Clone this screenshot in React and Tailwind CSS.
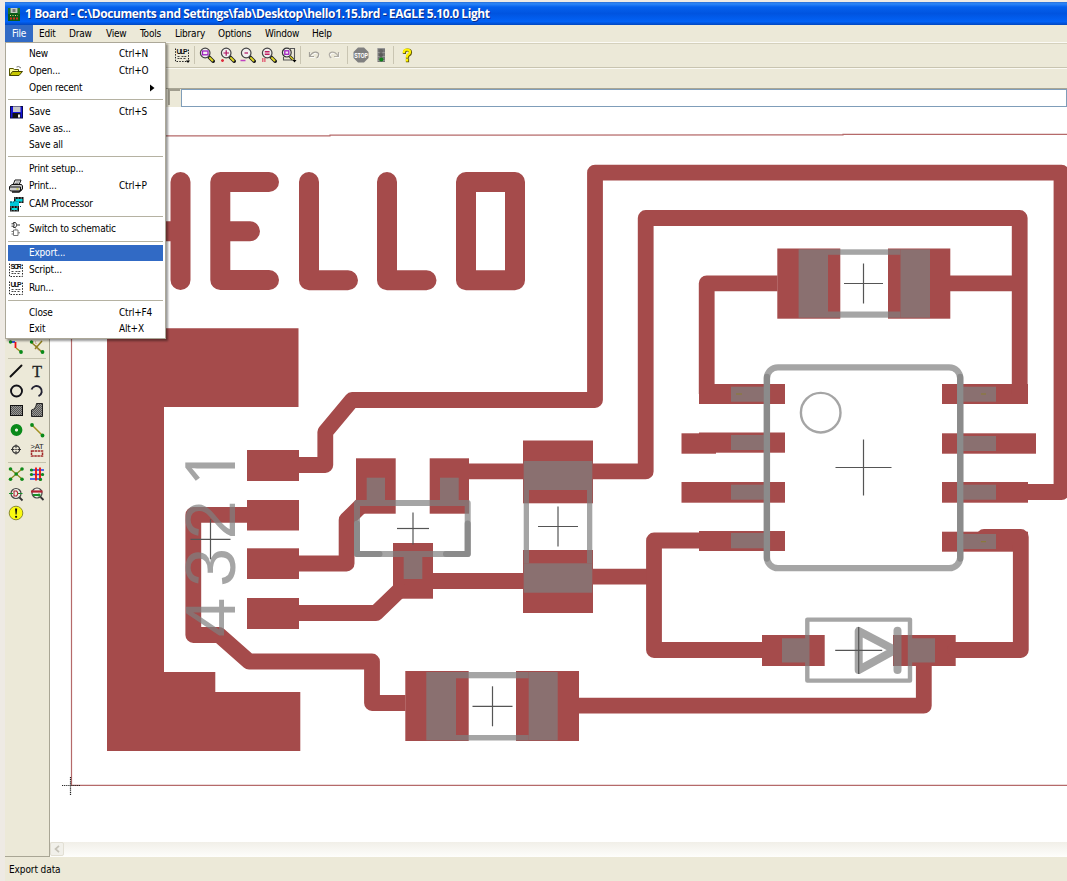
import React from "react";

const RED = "#a54b4b";

/* ---------- icons ---------- */
function Svg({ w = 16, h = 16, children }) {
  return (
    <svg width={w} height={h} viewBox={`0 0 ${w} ${h}`} fill="none" className="block shrink-0">
      {children}
    </svg>
  );
}

const FolderIcon = () => (
  <Svg>
    <path d="M1.500 12.500V5.500H5L6.500 6.500H10.500V8" fill="#ffff9a" stroke="#555500" />
    <path d="M1.500 12.500L4.500 8.500H14.500L11 12.500Z" fill="#c8c800" stroke="#444400" />
    <path d="M8.500 4Q10.500 2.500 13 5" stroke="#777" />
  </Svg>
);
const SaveIcon = () => (
  <Svg>
    <rect x="2" y="2" width="13" height="12.500" fill="#0a0a50" />
    <rect x="3" y="3" width="11" height="10.500" fill="#1414d8" />
    <rect x="5" y="2.500" width="7.500" height="5.500" fill="#c8c8c8" />
    <rect x="4.500" y="9" width="8" height="5" fill="#111" />
    <rect x="10" y="10.500" width="2" height="3" fill="#eee" />
  </Svg>
);
const PrintIcon = () => (
  <Svg>
    <path d="M5 7L7 2H13L11 7" fill="#fff" stroke="#111" />
    <path d="M7.500 4H11.500M6.500 5.500H10.500" stroke="#555" strokeWidth=".8" />
    <path d="M1.500 8.500L4 6.500H13.500L14.500 8V11L12.500 13H2.500L1.500 11.500Z" fill="#ccc" stroke="#111" />
    <path d="M2 9H12.500V12.500" stroke="#111" />
    <path d="M4 14H11L13.500 11.500" stroke="#111" strokeWidth="1.400" />
    <rect x="8.500" y="10.500" width="2" height="1" fill="#cc0" />
  </Svg>
);
const CamIcon = () => (
  <Svg>
    <rect x="6" y="1" width="9.500" height="6" fill="#111" />
    <path d="M6.500 2H15M6.500 6H15" stroke="#9aa" strokeDasharray="1.500 1.500" />
    <rect x="7.500" y="3" width="7" height="2.500" fill="#00d8e0" />
    <rect x="2" y="5.500" width="9" height="5.500" fill="#00c8d8" />
    <path d="M2 6H6M6 10.500H13" stroke="#045" strokeDasharray="2 1" />
    <rect x="2" y="10" width="9" height="5.500" fill="#111" />
    <path d="M2.500 11H10.500M2.500 15H10.500" stroke="#9aa" strokeDasharray="1.500 1.500" />
    <rect x="3.500" y="12" width="6" height="2" fill="#00e0e0" />
  </Svg>
);
const GateIcon = () => (
  <Svg>
    <path d="M5.500 1.500H7.500Q10.500 4 7.500 6.500H5.500Q6.800 4 5.500 1.500ZM3.500 2.800H6M3.500 5.200H6M9.300 4H12" stroke="#333" strokeWidth="1" />
    <path d="M5.500 9H10V14.500H5.500ZM3.500 10.500H5.500M3.500 13H5.500M10 11.800H12M7.800 7.500V9" stroke="#777" />
  </Svg>
);
function ScriptIcon({ label, arrow }) {
  return (
    <Svg>
      <path d="M1.500 1.500V14.500H14.500V1.500" stroke="#222" strokeDasharray="1.500 1.300" />
      <text x="8" y="7" textAnchor="middle" fontSize="7" fontWeight="700" textLength="11" fill="#111" fontFamily="Liberation Sans, sans-serif">
        {label}
      </text>
      <path d="M3.500 9.500H6M7.500 9.500H12.500M3.500 11.500H8M9.500 11.500H12" stroke="#333" strokeWidth=".9" strokeDasharray="2 .8" />
      {arrow && <path d="M12 13.500H16L14 16Z" fill="#000" />}
    </Svg>
  );
}
function Lens({ children }) {
  return (
    <Svg>
      <path d="M10 10L14.200 14.200" stroke="#222" strokeWidth="3.600" strokeLinecap="round" />
      <path d="M10.300 10.300L14 14" stroke="#e0d820" strokeWidth="1.900" />
      <circle cx="6.200" cy="6" r="4.800" fill="#f1eeee" stroke="#444" strokeWidth="1.200" />
      {children}
    </Svg>
  );
}
const ZoomFit = () => (
  <Lens>
    <rect x="3.500" y="4" width="5.500" height="3.800" stroke="#a020c0" strokeWidth="1.300" />
  </Lens>
);
const ZoomPlus = () => (
  <Lens>
    <path d="M3.500 6H9M6.200 3.300V8.800" stroke="#b01060" strokeWidth="1.200" />
    <path d="M1 13.500H4M2.500 12V15" stroke="#e03040" strokeWidth="1.500" />
  </Lens>
);
const ZoomMinus = () => (
  <Lens>
    <path d="M4.500 6H8" stroke="#b01060" strokeWidth="1.200" />
    <path d="M.5 13.500H5.500" stroke="#c040c0" strokeWidth="1.500" />
  </Lens>
);
const ZoomRedraw = () => (
  <Lens>
    <path d="M3.800 4.500H8.600M3.800 6H8.600M3.800 7.500H8.600" stroke="#c02060" strokeWidth="1" />
    <path d="M1 12H5M1 14H5" stroke="#e04060" strokeWidth="1.400" strokeDasharray="1.500 .6" />
  </Lens>
);
const ZoomSelect = () => (
  <Svg>
    <path d="M9 1.500H13.500V13H2.500V10" stroke="#555" strokeWidth="1.100" />
    <path d="M9 9.500L12 12.500" stroke="#222" strokeWidth="2.800" />
    <path d="M9 9.500L12 12.500" stroke="#e0d820" strokeWidth="1.300" />
    <circle cx="5.800" cy="5.600" r="4.400" fill="#f1eeee" stroke="#333" strokeWidth="1.200" />
    <rect x="3.800" y="3.800" width="4" height="3.500" stroke="#a020c0" strokeWidth="1.300" />
    <path d="M11.500 13H15.500L13.500 15.500Z" fill="#000" />
  </Svg>
);
const UndoIcon = () => (
  <Svg>
    <path d="M3.500 5V9.500H8M3.800 9.200Q6.500 4.800 10 5.200Q13.500 6 12.500 8.500Q12 10.500 10.500 11" stroke="#fff" transform="translate(.8 .8)" />
    <path d="M3.500 5V9.500H8M3.800 9.200Q6.500 4.800 10 5.200Q13.500 6 12.500 8.500Q12 10.500 10.500 11" stroke="#a3a099" strokeWidth="1.200" />
  </Svg>
);
const RedoIcon = () => (
  <Svg>
    <path d="M12.500 5V9.500H8M12.200 9.200Q9.500 4.800 6 5.200Q2.500 6 3.500 8.500Q4 10.500 5.500 11" stroke="#fff" transform="translate(.8 .8)" />
    <path d="M12.500 5V9.500H8M12.200 9.200Q9.500 4.800 6 5.200Q2.500 6 3.500 8.500Q4 10.500 5.500 11" stroke="#b0ada5" strokeWidth="1.200" />
  </Svg>
);
const StopIcon = () => (
  <Svg>
    <path d="M5 .5H11L15.500 5V11L11 15.500H5L.5 11V5Z" fill="#808080" />
    <text x="8" y="10.700" textAnchor="middle" fontSize="7.500" fontWeight="700" textLength="13.500" lengthAdjust="spacingAndGlyphs" fill="#fff" fontFamily="Liberation Sans, sans-serif">
      STOP
    </text>
  </Svg>
);
const LightIcon = () => (
  <Svg>
    <rect x="4.500" y="1" width="7.500" height="14" fill="#777" />
    <path d="M4.500 1.500H12M4.500 5.500H12M4.500 9.500H12M4.500 13.500H12" stroke="#bbb" strokeDasharray="1 1" />
    <circle cx="8" cy="4" r="2" fill="#666" />
    <circle cx="8" cy="8" r="2" fill="#5a5a5a" />
    <circle cx="8.300" cy="12.500" r="2.100" fill="#108018" />
  </Svg>
);
const HelpIcon = () => (
  <Svg>
    <g fill="none" strokeLinecap="square">
      <path d="M5 4.800Q5.200 2.600 8 2.600Q11 2.600 11 5Q11 6.600 9.200 7.600Q8 8.400 8 9.600M8 13V13.200" stroke="#5a5200" strokeWidth="3.200" transform="translate(.5 .4)" />
      <path d="M5 4.800Q5.200 2.600 8 2.600Q11 2.600 11 5Q11 6.600 9.200 7.600Q8 8.400 8 9.600M8 13V13.200" stroke="#fff200" strokeWidth="2.400" />
    </g>
  </Svg>
);

/* ---------- side palette icons ---------- */
const RouteIcon = () => (
  <Svg>
    <path d="M2 4H7" stroke="#1030e0" strokeWidth="1.600" />
    <path d="M7.500 4V10" stroke="#f01010" strokeWidth="1.800" />
    <path d="M8 10L13 14" stroke="#a09020" strokeWidth="1.400" />
    <circle cx="2.500" cy="4" r="1.700" fill="#0a8a1a" />
    <circle cx="13" cy="14" r="1.900" fill="#0a8a1a" />
  </Svg>
);
const RipupIcon = () => (
  <Svg>
    <path d="M2 4H7V10L12 14" stroke="#c08080" strokeDasharray="1 1" />
    <path d="M2 4L13 14M13 3L6 11" stroke="#908020" strokeWidth="1.500" />
    <circle cx="2.500" cy="4" r="1.700" fill="#0a8a1a" />
    <circle cx="13.500" cy="14" r="1.900" fill="#0a8a1a" />
  </Svg>
);
const WireIcon = () => (
  <Svg>
    <path d="M2.500 13.500L13.500 2.500" stroke="#111" strokeWidth="1.900" strokeLinecap="round" />
  </Svg>
);
const TextIcon = () => (
  <Svg>
    <text x="8" y="13.500" textAnchor="middle" fontSize="16" fill="#222" stroke="#222" strokeWidth=".3" fontFamily="Liberation Serif, serif">
      T
    </text>
  </Svg>
);
const CircleIcon = () => (
  <Svg>
    <circle cx="8.500" cy="8" r="5.500" stroke="#111118" strokeWidth="1.900" />
  </Svg>
);
const ArcIcon = () => (
  <Svg>
    <path d="M2.500 6.500A5.300 5.300 0 1 1 9.500 13.200" stroke="#223" strokeWidth="1.900" />
  </Svg>
);
const HatchDefs = () => (
  <defs>
    <pattern id="hatch" width="2" height="2" patternUnits="userSpaceOnUse">
      <rect width="2" height="2" fill="#9a9a96" />
      <rect width="1" height="1" fill="#555" />
      <rect x="1" y="1" width="1" height="1" fill="#555" />
    </pattern>
  </defs>
);
const RectIcon = () => (
  <Svg>
    <HatchDefs />
    <rect x="2.500" y="3.500" width="12" height="10" fill="url(#hatch)" stroke="#111" />
  </Svg>
);
const PolyIcon = () => (
  <Svg>
    <path d="M2.500 14.500V8Q7 7 7.500 1.500H13.500V14.500Z" fill="url(#hatch)" stroke="#222" />
  </Svg>
);
const ViaIcon = () => (
  <Svg>
    <circle cx="8.500" cy="8" r="3.700" stroke="#0a8a1a" strokeWidth="4.400" />
    <circle cx="8.500" cy="8" r="1.300" fill="#e6f5e0" />
  </Svg>
);
const SignalIcon = () => (
  <Svg>
    <path d="M3 3L13.500 13.500" stroke="#a09020" strokeWidth="1.500" />
    <circle cx="3" cy="3" r="1.900" fill="#0a8a1a" />
    <circle cx="13.500" cy="13.500" r="1.900" fill="#0a8a1a" />
  </Svg>
);
const HoleIcon = () => (
  <Svg>
    <circle cx="8" cy="7.500" r="3.600" stroke="#333" strokeWidth="1.200" />
    <path d="M8 2.500V6M8 9V12.500M3 7.500H6.500M9.500 7.500H13" stroke="#333" />
    <circle cx="8" cy="7.500" r=".8" fill="#333" />
  </Svg>
);
const AttrIcon = () => (
  <Svg>
    <text x="8" y="7" textAnchor="middle" fontSize="7.500" fill="#222" textLength="13" fontFamily="Liberation Sans, sans-serif">
      &gt;AT
    </text>
    <path d="M2.500 9H13.500V14H2.500Z" stroke="#a02828" strokeWidth="1.500" strokeDasharray="2.500 .6" />
  </Svg>
);
const RatsnestIcon = () => (
  <Svg>
    <path d="M2.500 3L14 13M14 3L2.500 13" stroke="#8a8a20" strokeWidth="1.200" />
    {[[2.5, 3], [14, 3], [8.2, 8], [2.5, 13.2], [14, 13.2]].map(([x, y]) => (
      <circle key={`${x}-${y}`} cx={x} cy={y} r="1.800" fill="#118a1a" />
    ))}
  </Svg>
);
const AutoIcon = () => (
  <Svg>
    <path d="M1 4H15M1 8.500H15M1 13H13" stroke="#1a3ce8" strokeWidth="1.500" />
    <path d="M7 1.500V14.500M11 1.500V14.500" stroke="#e81818" strokeWidth="1.900" />
    {[[2.5, 4], [2.5, 8.5], [13.5, 8.5], [11.5, 13.5]].map(([x, y]) => (
      <circle key={`${x}-${y}`} cx={x} cy={y} r="1.600" fill="#118a1a" />
    ))}
  </Svg>
);
const ErcIcon = () => (
  <Svg>
    <circle cx="8" cy="7.500" r="5" fill="#eaf0e6" stroke="#444" strokeWidth="1.200" />
    <path d="M1 7.500H5M10 7.500H14.500" stroke="#18902a" strokeWidth="1.200" />
    <path d="M6 5H8.500Q11 7.500 8.500 10H6Z" stroke="#b02030" strokeWidth="1.100" />
    <path d="M11.500 11.500L14.500 14.500" stroke="#333" strokeWidth="1.800" />
  </Svg>
);
const DrcIcon = () => (
  <Svg>
    <circle cx="8" cy="7" r="5" fill="#eef0e8" stroke="#444" strokeWidth="1.200" />
    <path d="M2 5.500H13.500" stroke="#b02030" strokeWidth="2.200" />
    <path d="M4 9H11" stroke="#18902a" strokeWidth="2" />
    <circle cx="10" cy="9" r="1.600" fill="#18902a" />
    <path d="M11.500 11L14.500 14" stroke="#333" strokeWidth="1.800" />
  </Svg>
);
const ErrorsIcon = () => (
  <Svg>
    <circle cx="8" cy="8" r="6.800" fill="#fbfb10" stroke="#8c8c30" />
    <path d="M7 3.500H9.200L8.600 9.500H7.600Z" fill="#111" />
    <circle cx="8.100" cy="11.800" r="1.100" fill="#111" />
  </Svg>
);

/* ---------- menu ---------- */
const MENU = [
  ["New", "Ctrl+N", null, "h-[17px]"],
  ["Open...", "Ctrl+O", <FolderIcon />, "h-[17px]"],
  ["Open recent", "▶", null, "h-[17px]"],
  ["sep", "h-[7px]"],
  ["Save", "Ctrl+S", <SaveIcon />, "h-[18px]"],
  ["Save as...", "", null, "h-[16px]"],
  ["Save all", "", null, "h-[15px]"],
  ["sep", "h-[8px]"],
  ["Print setup...", "", null, "h-[17px]"],
  ["Print...", "Ctrl+P", <PrintIcon />, "h-[17px]"],
  ["CAM Processor", "", <CamIcon />, "h-[19px]"],
  ["sep", "h-[6px]"],
  ["Switch to schematic", "", <GateIcon />, "h-[19px]"],
  ["sep", "h-[7px]"],
  ["Export...", "", null, "h-[16px]"],
  ["Script...", "", <ScriptIcon label="SCR" />, "h-[18px]"],
  ["Run...", "", <ScriptIcon label="ULP" />, "h-[18px]"],
  ["sep", "h-[7px]"],
  ["Close", "Ctrl+F4", null, "h-[17px]"],
  ["Exit", "Alt+X", null, "h-[16px]"],
];

function FileMenu() {
  return (
    <div className="absolute top-[42px] left-[5px] w-[161px] h-[297px] bg-white border border-[#aca899] pt-[2px] px-[2px] shadow-[2px_2px_2px_rgba(0,0,0,0.4)]">
      {MENU.map((m, i) =>
        m[0] === "sep" ? (
          <div key={i} className={`flex items-center ${m[1]}`}>
            <div className="h-px w-full bg-[#b5b2a2]" />
          </div>
        ) : (
          <div key={i} className={`flex items-center ${m[3]} ${m[0] === "Export..." ? "bg-[#316ac5] text-white" : "text-black"}`}>
            <div className="w-[21px] shrink-0">{m[2]}</div>
            <div className="w-[90px] shrink-0 whitespace-nowrap">{m[0]}</div>
            {m[1] === "▶" ? (
              <svg width="5" height="8" viewBox="0 0 5 8" className="ml-[31px]">
                <path d="M0 .5L4.500 4L0 7.500Z" fill="#000" />
              </svg>
            ) : (
              <div className="whitespace-nowrap">{m[1]}</div>
            )}
          </div>
        )
      )}
    </div>
  );
}

/* ---------- board drawing ---------- */
function Cross({ x, y, rx, ry }) {
  return (
    <g strokeWidth="1.200" stroke="#555">
      <path d={`M${x - rx} ${y}H${x + rx}`} />
      <path d={`M${x} ${y - ry}V${y + ry}`} />
    </g>
  );
}
function Rects({ list }) {
  return list.map(([x1, y1, x2, y2], i) => <rect key={i} x={x1} y={y1} width={x2 - x1} height={y2 - y1} />);
}

const PADS = [
  [247, 450, 299, 481], [247, 500, 299, 530.5], [247, 548.3, 299, 579], [247, 598, 299, 629],
  [356, 458.3, 395.7, 513.7], [429.7, 458.3, 469, 513.7], [393, 543, 433, 598.7],
  [523, 440.5, 593, 503.3], [523, 550, 593, 613],
  [405.3, 671, 468.7, 741], [516, 671, 579, 741],
  [777.3, 248.5, 840.3, 318.7], [888, 248.5, 950.3, 318.7],
  [762, 635, 824.7, 666], [893, 635, 955.7, 666],
  [699, 384, 785, 404], [699, 432.5, 785, 452.7], [681.5, 433.3, 716, 453.7], [681.5, 482, 785, 502.7], [699, 531, 785, 551],
  [942, 384, 1028, 404], [942, 433.3, 1036, 453.7], [942, 482, 1028, 502.7], [942, 531.7, 1028, 551.7],
];
const SILK_PADS = [
  [366.7, 477.7, 385, 503], [440, 477.7, 458.7, 503], [403.7, 554, 422.3, 579],
  [523.7, 461, 592.3, 490], [523.7, 563.3, 592.3, 592.7], [523.7, 490, 529, 563.3], [587, 490, 592.3, 563.3],
  [426.3, 672, 456, 740.3], [528.7, 672, 557.7, 740.3], [456, 672, 528.7, 678.3], [456, 735, 528.7, 740.5],
  [798.6, 249.3, 828, 317.7], [900.5, 249.3, 930, 317.7], [828, 249.3, 900.5, 254.8], [828, 311.5, 900.5, 317.7],
  [782, 638.3, 808, 662.5], [909, 638.3, 935, 662.5],
  [731, 386.7, 766, 401.7], [731, 435, 766, 450], [731, 484.7, 766, 499.7], [731, 533, 766, 548.3],
  [961, 386.7, 996, 401.7], [961, 436, 996, 451], [961, 484.7, 996, 499.7], [961, 534, 996, 549],
];

function Board() {
  return (
    <svg width="1017" height="735" viewBox="50 107 1017 735" className="block shrink-0 bg-white">
      <g fill="none" stroke="#b56a6a" strokeWidth="1.200">
        <path d="M71.500 136V785.300H1067" />
        <path d="M71.500 135.800H330V135.200L843 134.800V134.300H1067" />
      </g>
      <g fill={RED}>
        <path d="M107 328.300H298.500V407H164V672H215.300V692H300.300V751H107Z" />
        <Rects list={PADS} />
      </g>
      <g fill="none" stroke={RED} strokeWidth="20" strokeLinecap="round" strokeLinejoin="round">
        <path d="M101 182V280M180.500 182V280M101 231.300H180.500" />
        <path d="M269 182H220.300V280H269M220.300 231.300H250" />
        <path d="M309 182V280.300H348" />
        <path d="M387 182V280.300H426.500" />
        <path d="M466 182H515V280.300H466Z" />
      </g>
      <g fill="none" stroke={RED} strokeWidth="15.800" strokeLinejoin="round">
        <path d="M299 465H325.300V432L352 400H595V172.700H1061.500V492H1027" />
        <path d="M593 471.400H645.700V218H1019.700V394" />
        <path d="M950 283.300H1019M777.500 283.300H706.700V394" />
        <path d="M247 514.800H193.300V635H219L249 661.500H372V703H405.500" />
        <path d="M299 563.500H346.600V520L370 497" />
        <path d="M299 613H376L405 585" />
        <path d="M433 581H523M469 471.400H523M593 576.700H654" />
        <path d="M699 540.500H654V650H762" />
        <path d="M955 650H1020.800V537H984" strokeLinecap="round" />
        <path d="M579 705.700H923.800V666" />
      </g>

      <g opacity=".7" fill="#808080" stroke="none">
        <Rects list={SILK_PADS} />
        <g fill="none" stroke="#808080">
          <rect x="357" y="503" width="110.700" height="51" strokeWidth="6" strokeLinejoin="round" />
          <rect x="766.900" y="367.300" width="193.300" height="200.900" rx="11" strokeWidth="6.300" />
          <rect x="807.300" y="619.600" width="102.700" height="61" strokeWidth="4.400" strokeLinejoin="round" />
          <circle cx="820.700" cy="412.700" r="19.800" strokeWidth="2.400" />
          <path d="M858.700 631V670L895 650Z" strokeWidth="8" strokeLinejoin="round" />
          <path d="M897.500 630.700V670" strokeWidth="8" strokeLinecap="round" />
        </g>
      </g>
      <g opacity=".7" fill="#808080" fontSize="70.500">
        <text transform="translate(235 487) rotate(-90)" fontSize="69" fontFamily="Noto Sans, sans-serif">1</text>
        <g fontFamily="Liberation Sans, sans-serif">
          <text transform="translate(235 539.500) rotate(-90)">2</text>
          <text transform="translate(235 587) rotate(-90)">3</text>
          <text transform="translate(235 637) rotate(-90)">4</text>
        </g>
      </g>
      <g fill="none" stroke="#8b8b8b" strokeLinecap="round" strokeLinejoin="round">
        <path d="M357 523.500V554H379.500M446 554H467.700V523.500" strokeWidth="6" />
        <path d="M766.900 377V558.500M960.200 377V558.500" strokeWidth="6.300" />
      </g>
      <path d="M736 394H742M981 394H986M981 541.700H986" stroke="#8b7d2f" />

      <Cross x={863.5} y={283.5} rx={19.5} ry={20} />
      <Cross x={863.5} y={467.5} rx={28} ry={28} />
      <Cross x={558} y={526.5} rx={20} ry={20} />
      <Cross x={492.5} y={706.3} rx={20} ry={20} />
      <Cross x={413} y={528.5} rx={16} ry={16} />
      <Cross x={210.5} y={539.3} rx={20} ry={20} />
      <Cross x={858.7} y={650.4} rx={23.5} ry={23.5} />
      <path d="M62 785.500H80M70.500 777V795" stroke="#222" strokeWidth="1.200" strokeDasharray="1.200 .9" />
    </svg>
  );
}

const MENUBAR = [
  ["Edit", "w-[30px]"], ["Draw", "w-[37px]"], ["View", "w-[34px]"], ["Tools", "w-[35px]"],
  ["Library", "w-[43px]"], ["Options", "w-[47px]"], ["Window", "w-[47px]"], ["Help", "w-[40px]"],
];

const VSep = ({ className }) => <div className={`h-[18px] w-px bg-[#c9c5b2] ${className}`} />;
const HSep = ({ className }) => <div className={`ml-[3px] h-px w-[38px] bg-[#c5c2ae] ${className}`} />;
function Pair({ a, b, className }) {
  return (
    <div className={`flex gap-[5px] pl-[3px] ${className}`}>
      {a}
      {b}
    </div>
  );
}

export default function App() {
  return (
    <div className="relative flex h-[881px] w-[1067px] overflow-hidden bg-[#eeeae4] pl-[5px] pt-[2px] text-[10px] leading-none text-black [font-family:'DejaVu_Sans_Condensed','DejaVu_Sans',sans-serif] [font-stretch:condensed] tracking-[-0.2px]">
      <div className="flex w-[1062px] shrink-0 flex-col bg-[#ece9d8]">
        <div className="flex h-[23px] shrink-0 items-center bg-[linear-gradient(180deg,#2a70d8_0%,#2c86f8_8%,#0560ec_22%,#0054e0_50%,#0262f6_85%,#0248c0_100%)] pl-[2px]">
          <Svg w={14} h={14}>
            <rect x="1" y="1" width="12" height="13" fill="#0b5a18" />
            <rect x="3.500" y="1" width="7" height="5" fill="#c4ccc0" />
            <path d="M2 1.500V7M12 1.500V7" stroke="#58c058" strokeDasharray="1 1" />
            <path d="M3 8.500H11" stroke="#e0e080" strokeDasharray="1 1.500" />
            <path d="M3 11.500H11" stroke="#d03020" strokeWidth="2" strokeDasharray="2 1" />
            <rect x="5.500" y="2" width="3" height="3" fill="#777" />
          </Svg>
          <div className="ml-[4px] whitespace-pre text-[12px] font-bold tracking-[-0.4px] text-white [font-family:'Open_Sans','Noto_Sans',sans-serif] [font-stretch:normal] [text-shadow:1px_1px_0_#0a2e8a]">
            1 Board - C:\Documents and Settings\fab\Desktop\hello1.15.brd - EAGLE 5.10.0 Light
          </div>
        </div>

        <div className="flex h-[17px] shrink-0">
          <div className="flex w-[28px] items-center bg-[#316ac5] pl-[7px] text-white">File</div>
          {MENUBAR.map(([t, w]) => (
            <div key={t} className={`flex items-center pl-[6px] ${w}`}>
              {t}
            </div>
          ))}
        </div>

        <div className="flex h-[25px] shrink-0 items-center border-t border-[#fbfaf5] pl-[169px] shadow-[inset_0_1px_0_#d5d1bd]">
          <ScriptIcon label="ULP" arrow />
          <VSep className="ml-[4px] mr-[4px]" />
          <div className="flex gap-[4.500px]">
            <ZoomFit />
            <ZoomPlus />
            <ZoomMinus />
            <ZoomRedraw />
            <ZoomSelect />
          </div>
          <VSep className="ml-[3px] mr-[5px]" />
          <div className="flex gap-[4px]">
            <UndoIcon />
            <RedoIcon />
          </div>
          <VSep className="ml-[5px] mr-[5px]" />
          <div className="flex gap-[4px]">
            <StopIcon />
            <LightIcon />
          </div>
          <VSep className="ml-[4px] mr-[5px]" />
          <HelpIcon />
        </div>
        <div className="h-[22px] shrink-0 border-b border-t border-b-[#a9a695] border-t-[#c8c4b0] shadow-[inset_0_1px_0_#faf9f2]" />

        <div className="flex min-h-0 flex-1">
          <div className="w-[45px] shrink-0 border-b border-r border-[#a9a695] pt-[249px]">
            <Pair a={<RouteIcon />} b={<RipupIcon />} />
            <HSep className="mt-[4px] mb-[4px]" />
            <Pair a={<WireIcon />} b={<TextIcon />} />
            <Pair className="mt-[4px]" a={<CircleIcon />} b={<ArcIcon />} />
            <Pair className="mt-[3px]" a={<RectIcon />} b={<PolyIcon />} />
            <Pair className="mt-[4px]" a={<ViaIcon />} b={<SignalIcon />} />
            <Pair className="mt-[4px]" a={<HoleIcon />} b={<AttrIcon />} />
            <HSep className="mt-[4px] mb-[3px]" />
            <Pair a={<RatsnestIcon />} b={<AutoIcon />} />
            <Pair className="mt-[4px]" a={<ErcIcon />} b={<DrcIcon />} />
            <Pair className="mt-[3px]" a={<ErrorsIcon />} />
          </div>
          <div className="flex min-w-0 flex-1 flex-col">
            <div className="flex h-[18px] shrink-0 bg-[#ece9d8] pl-[118px]">
              <div className="mr-[1px] h-[16px] w-[12px] border-l-2 border-t-2 border-[#a09d8e]" />
              <div className="flex-1 border border-[#7f9db9] bg-white" />
            </div>
            <Board />
            <div className="flex h-[15px] shrink-0 bg-[linear-gradient(180deg,#f1efe8,#fefefc)]">
              <div className="flex h-[14px] w-[14px] items-center justify-center rounded-[2px] border border-[#e2dfd4] bg-[#f1f0ea]">
                <svg width="6" height="8" viewBox="0 0 6 8" fill="none">
                  <path d="M5 .8L1.500 4L5 7.200" stroke="#c5c2b8" strokeWidth="1.700" />
                </svg>
              </div>
            </div>
          </div>
        </div>

        <div className="flex h-[24px] shrink-0 items-center pl-[4px] pt-[1px] tracking-[-0.1px]">Export data</div>
      </div>
      <FileMenu />
    </div>
  );
}
